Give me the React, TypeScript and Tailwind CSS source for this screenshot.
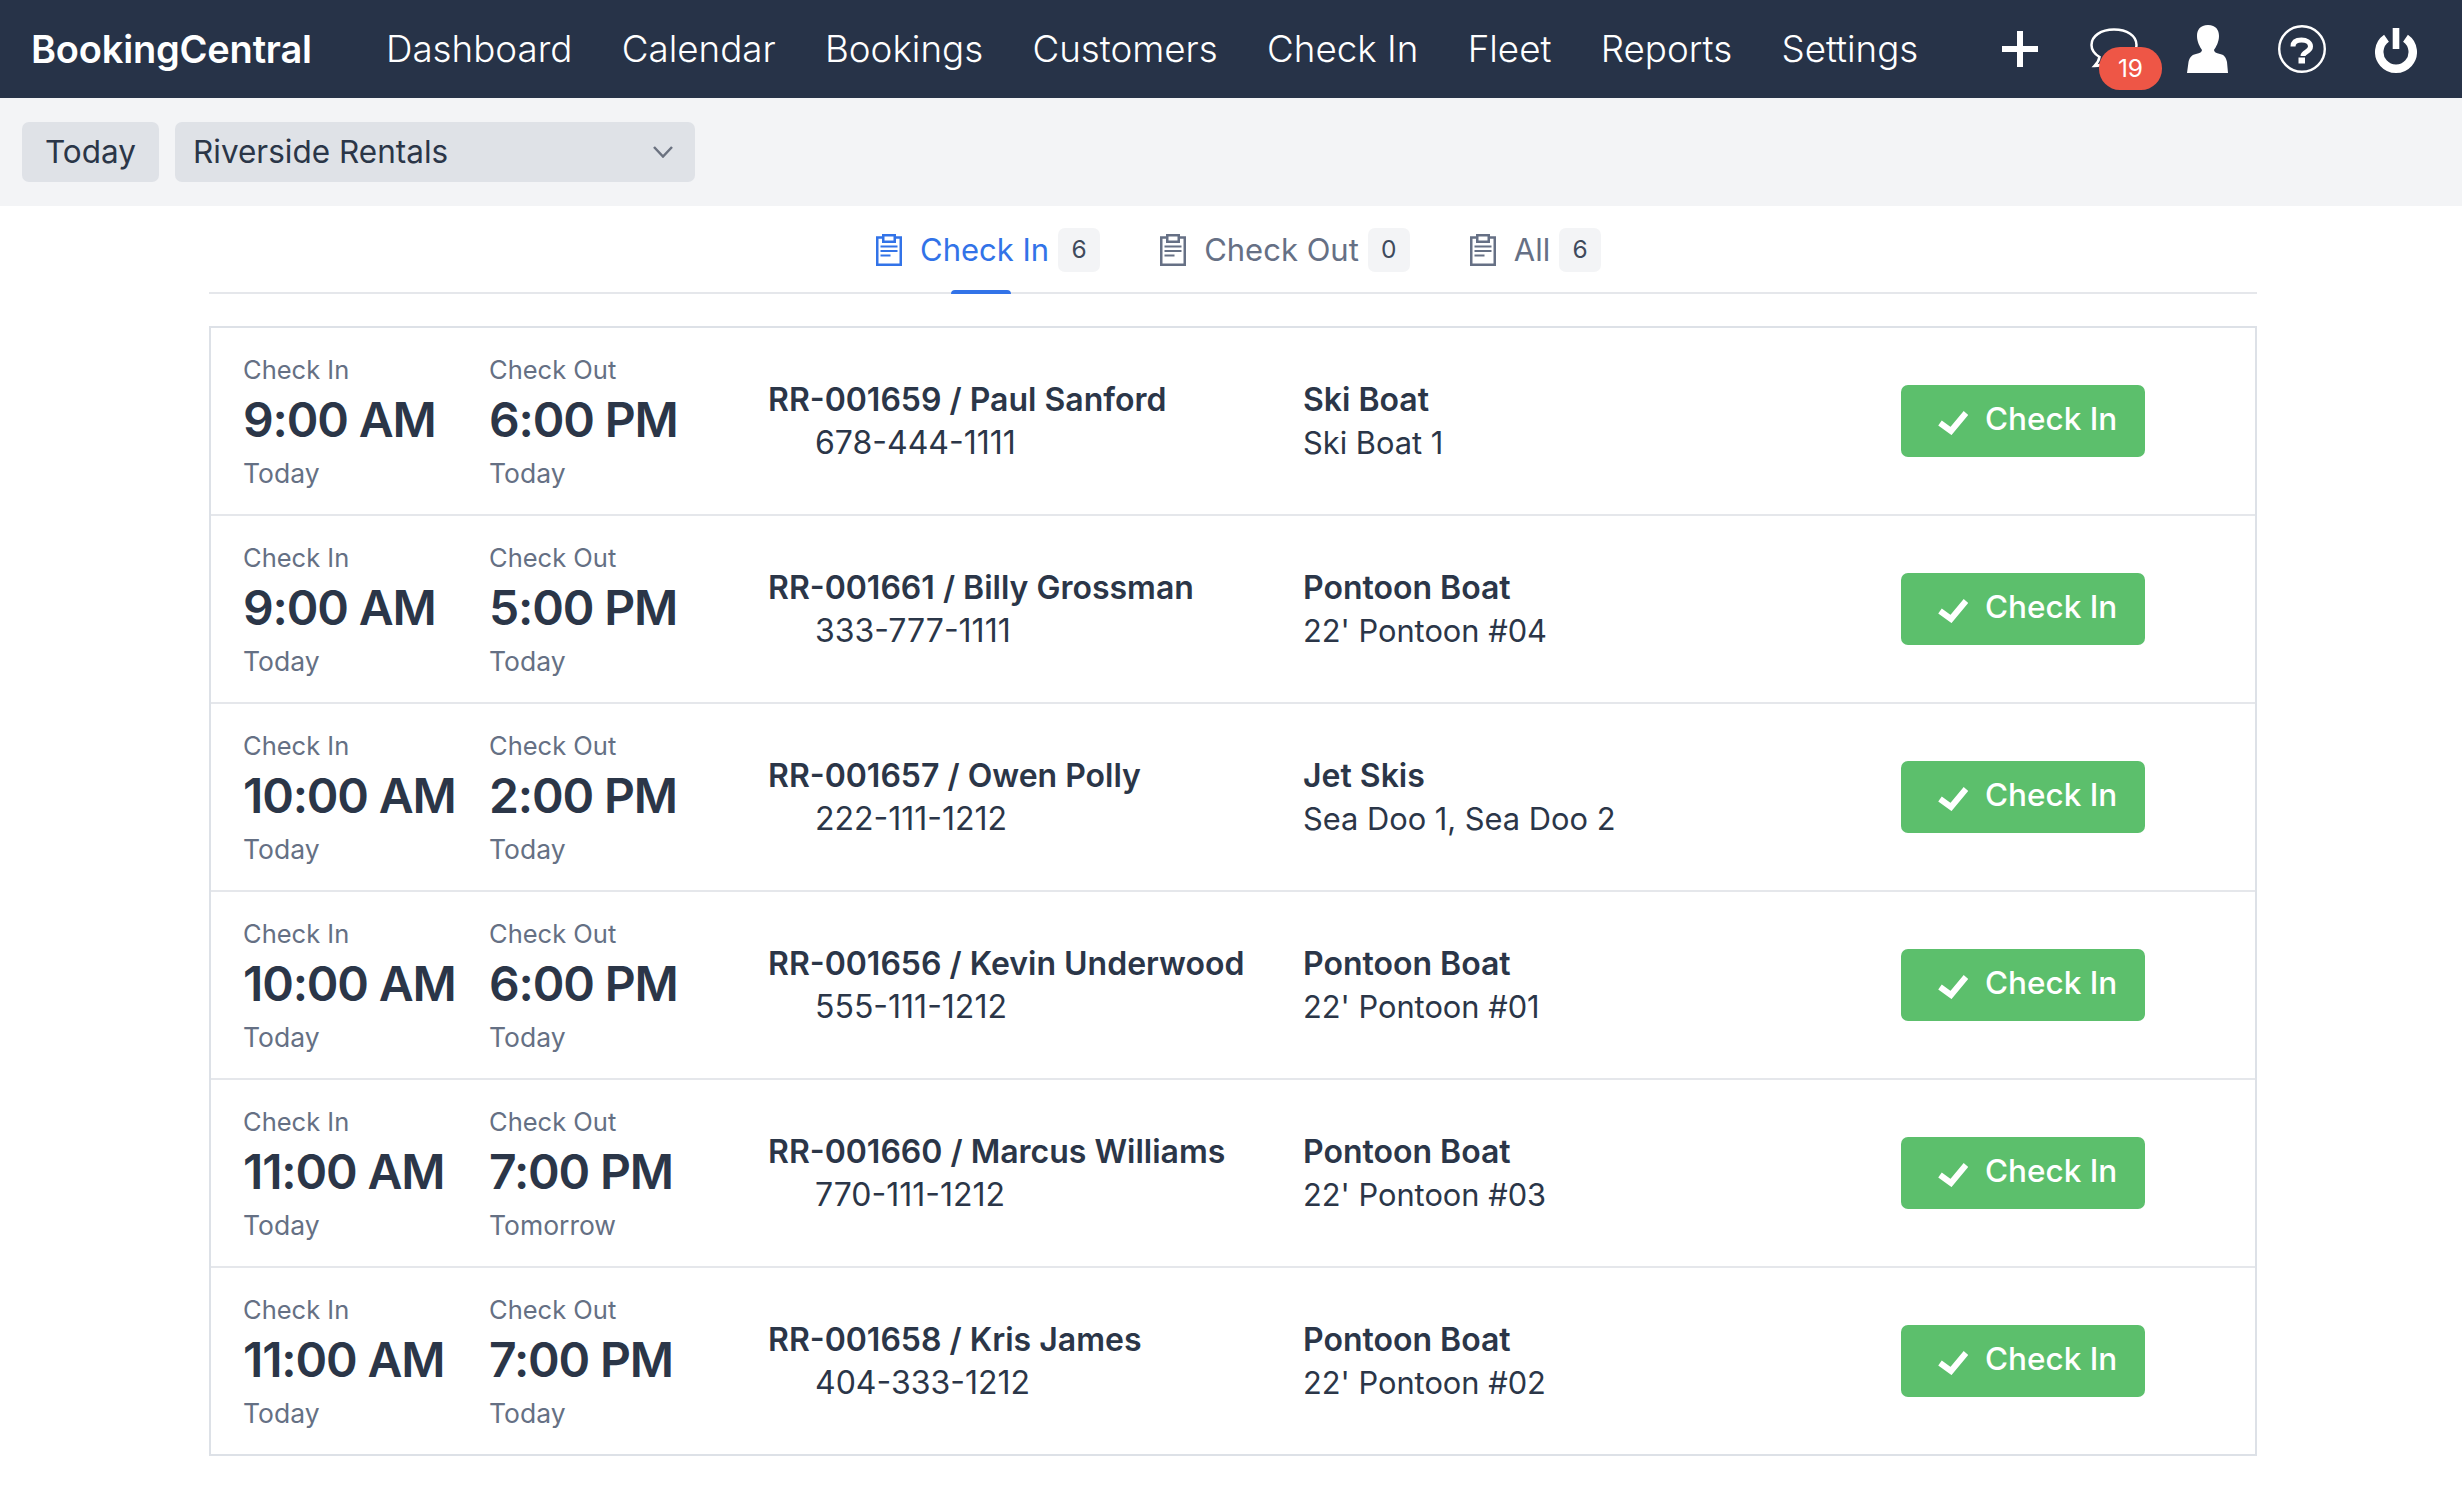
import React from "react";

const rows = [
  { in: "9:00 AM", out: "6:00 PM", outDay: "Today", id: "RR-001659 / Paul Sanford", phone: "678-444-1111", type: "Ski Boat", unit: "Ski Boat 1" },
  { in: "9:00 AM", out: "5:00 PM", outDay: "Today", id: "RR-001661 / Billy Grossman", phone: "333-777-1111", type: "Pontoon Boat", unit: "22' Pontoon #04" },
  { in: "10:00 AM", out: "2:00 PM", outDay: "Today", id: "RR-001657 / Owen Polly", phone: "222-111-1212", type: "Jet Skis", unit: "Sea Doo 1, Sea Doo 2" },
  { in: "10:00 AM", out: "6:00 PM", outDay: "Today", id: "RR-001656 / Kevin Underwood", phone: "555-111-1212", type: "Pontoon Boat", unit: "22' Pontoon #01" },
  { in: "11:00 AM", out: "7:00 PM", outDay: "Tomorrow", id: "RR-001660 / Marcus Williams", phone: "770-111-1212", type: "Pontoon Boat", unit: "22' Pontoon #03" },
  { in: "11:00 AM", out: "7:00 PM", outDay: "Today", id: "RR-001658 / Kris James", phone: "404-333-1212", type: "Pontoon Boat", unit: "22' Pontoon #02" },
];

const navItems = ["Dashboard", "Calendar", "Bookings", "Customers", "Check In", "Fleet", "Reports", "Settings"];

function Clipboard({ className }: { className: string }) {
  return (
    <svg viewBox="0 0 26 32" className={className} fill="none" stroke="currentColor" strokeWidth="2.5">
      <path d="M7 3.5H1.25v27.25h23.5V3.5H19" />
      <path d="M7.25 1.25h11.5v6.5H7.25z" />
      <path d="M4.5 12.5h17M4.5 17h17M4.5 21.5h10" strokeWidth="2" />
    </svg>
  );
}

function TimeCol({ label, time, day }: { label: string; time: string; day: string }) {
  return (
    <div className="w-[246px] shrink-0 pt-[3px]">
      <div className="text-[25.5px] leading-[36px] text-[#657084]">{label}</div>
      <div className="text-[48px] leading-[64px] font-semibold tracking-[-1.15px] text-[#2b3648] whitespace-nowrap">{time}</div>
      <div className="text-[26.5px] leading-[42px] text-[#657084]">{day}</div>
    </div>
  );
}

function Tab({ label, count, active }: { label: string; count: number; active?: boolean }) {
  return (
    <div className={"relative flex items-center h-[44px] " + (active ? "text-[#3273e8]" : "text-[#667085]")}>
      <Clipboard className="w-[26px] h-[32px]" />
      <span className="ml-[18px] text-[31px] leading-[46px]">{label}</span>
      <span className="ml-[9px] w-[42px] h-[44px] rounded-[7px] bg-[#f3f4f6] text-[24.5px] leading-[42px] text-center text-[#3f4a5c]">{count}</span>
      {active && <span className="absolute left-[75px] top-[62px] w-[60px] h-[4px] rounded-t-[4px] bg-[#3273e8]" />}
    </div>
  );
}

export default function App() {
  return (
    <div className="min-h-[1490px] bg-white font-['Inter',sans-serif] text-[#2b3648]">
      <nav className="h-[98px] bg-[#273348] flex items-center text-white pl-[31px] pr-[45px]">
        <div className="w-[355px] text-[38px] font-semibold tracking-[-0.2px]">BookingCentral</div>
        <div className="flex gap-[49.3px] text-[36.75px] font-light">
          {navItems.map((n) => (
            <span key={n}>{n}</span>
          ))}
        </div>
        <div className="ml-auto flex items-start h-[48px]">
          <svg viewBox="0 0 36 36" className="mt-[6px] w-[36px] h-[36px]" fill="#fff">
            <path d="M15 0h6v15h15v6H21v15h-6V21H0v-6h15z" />
          </svg>
          <div className="relative ml-[52px] mt-[3px] w-[48px] h-[40px]">
            <svg viewBox="0 0 48 40" className="w-[48px] h-[40px]" fill="none" stroke="#fff" strokeWidth="2.5">
              <path d="M24 1.5C11 1.5 1.5 8 1.5 17c0 5 3 9 8 12-.5 3-2 6-5 9 5 0 9-2 12-5 2.5.5 5 .5 7.5.5 13 0 22.5-7 22.5-16.5S37 1.5 24 1.5z" />
            </svg>
            <span className="absolute left-[9px] top-[19px] w-[63px] h-[43px] rounded-[21px] bg-[#ee5646] text-center text-[24.5px] leading-[43px] text-white">19</span>
          </div>
          <svg viewBox="0 0 41 48" className="ml-[49px] w-[41px] h-[48px]" fill="#fff">
            <path d="M21 0C29 0 32 5 32 11C32 17 29 22 27 25C27 27 29 28 33 29C38 30 39 33 40 37L41 48H0L1.5 37C2.5 33 4 30 9 29C13 28 15 27 15 25C13 22 10 17 10 11C10 5 13 0 21 0Z" />
          </svg>
          <svg viewBox="0 0 48 48" className="ml-[50px] w-[48px] h-[48px]" fill="none">
            <circle cx="24" cy="24" r="22.8" stroke="#fff" strokeWidth="2.4" />
            <path d="M15 21.5c0-4.500 3.500-6.500 8.500-6.500s9 2.500 9 6.500c0 5.500-7.500 5-7.500 9.500" stroke="#fff" strokeWidth="5" />
            <rect x="20.5" y="32.5" width="6.5" height="6" fill="#fff" />
          </svg>
          <svg viewBox="0 0 42 45" className="ml-[49px] mt-[3px] w-[42px] h-[45px]" fill="none">
            <path d="M11.5 10.2a16.75 16.75 0 1 0 19 0" stroke="#fff" strokeWidth="8.5" />
            <rect x="17.7" y="0" width="6.6" height="21" fill="#fff" />
          </svg>
        </div>
      </nav>
      <div className="h-[108px] bg-[#f3f4f6] flex items-center pl-[22px] gap-[16px]">
        <div className="w-[137px] h-[60px] rounded-[7px] bg-[#dfe2e7] flex items-center justify-center text-[31.5px]">Today</div>
        <div className="w-[520px] h-[60px] rounded-[7px] bg-[#dfe2e7] flex items-center justify-between pl-[18px] pr-[22px] text-[31.5px]">
          <span>Riverside Rentals</span>
          <svg viewBox="0 0 20 12" className="w-[20px] h-[12px]" fill="none" stroke="#6b7280" strokeWidth="2.5">
            <path d="M1 1l9 9.5L19 1" />
          </svg>
        </div>
      </div>
      <div className="mx-[209px] w-[2048px]">
        <div className="h-[88px] border-b-2 border-[#e5e7eb] flex items-start gap-[60px] pl-[667px] pt-[22px]">
          <Tab label="Check In" count={6} active />
          <Tab label="Check Out" count={0} />
          <Tab label="All" count={6} />
        </div>
        <div className="mt-[32px] border-2 border-[#dde1e7]">
          {rows.map((r, i) => (
            <div key={r.id} className={"flex items-center pl-[32px] " + (i ? "border-t-2 border-[#e5e7eb] h-[188px]" : "h-[186px]")}>
              <TimeCol label="Check In" time={r.in} day="Today" />
              <TimeCol label="Check Out" time={r.out} day={r.outDay} />
              <div className="w-[535px] shrink-0 ml-[33px] leading-[43px]">
                <div className="text-[32px] font-semibold whitespace-nowrap">{r.id}</div>
                <div className="text-[32px] ml-[47px]">{r.phone}</div>
              </div>
              <div className="w-[598px] shrink-0 leading-[43px]">
                <div className="text-[32px] font-semibold">{r.type}</div>
                <div className="text-[30.8px]">{r.unit}</div>
              </div>
              <div className="w-[244px] h-[72px] rounded-[7px] bg-[#5cbf6c] text-white flex items-center pl-[37px]">
                <svg viewBox="0 0 30 25" className="w-[30px] h-[25px] mt-[3px]" fill="none" stroke="#fff" strokeWidth="6">
                  <path d="M2 13l11 8L28 3" />
                </svg>
                <span className="ml-[17px] text-[31.5px] font-medium -mt-[5px]">Check In</span>
              </div>
            </div>
          ))}
        </div>
      </div>
    </div>
  );
}
